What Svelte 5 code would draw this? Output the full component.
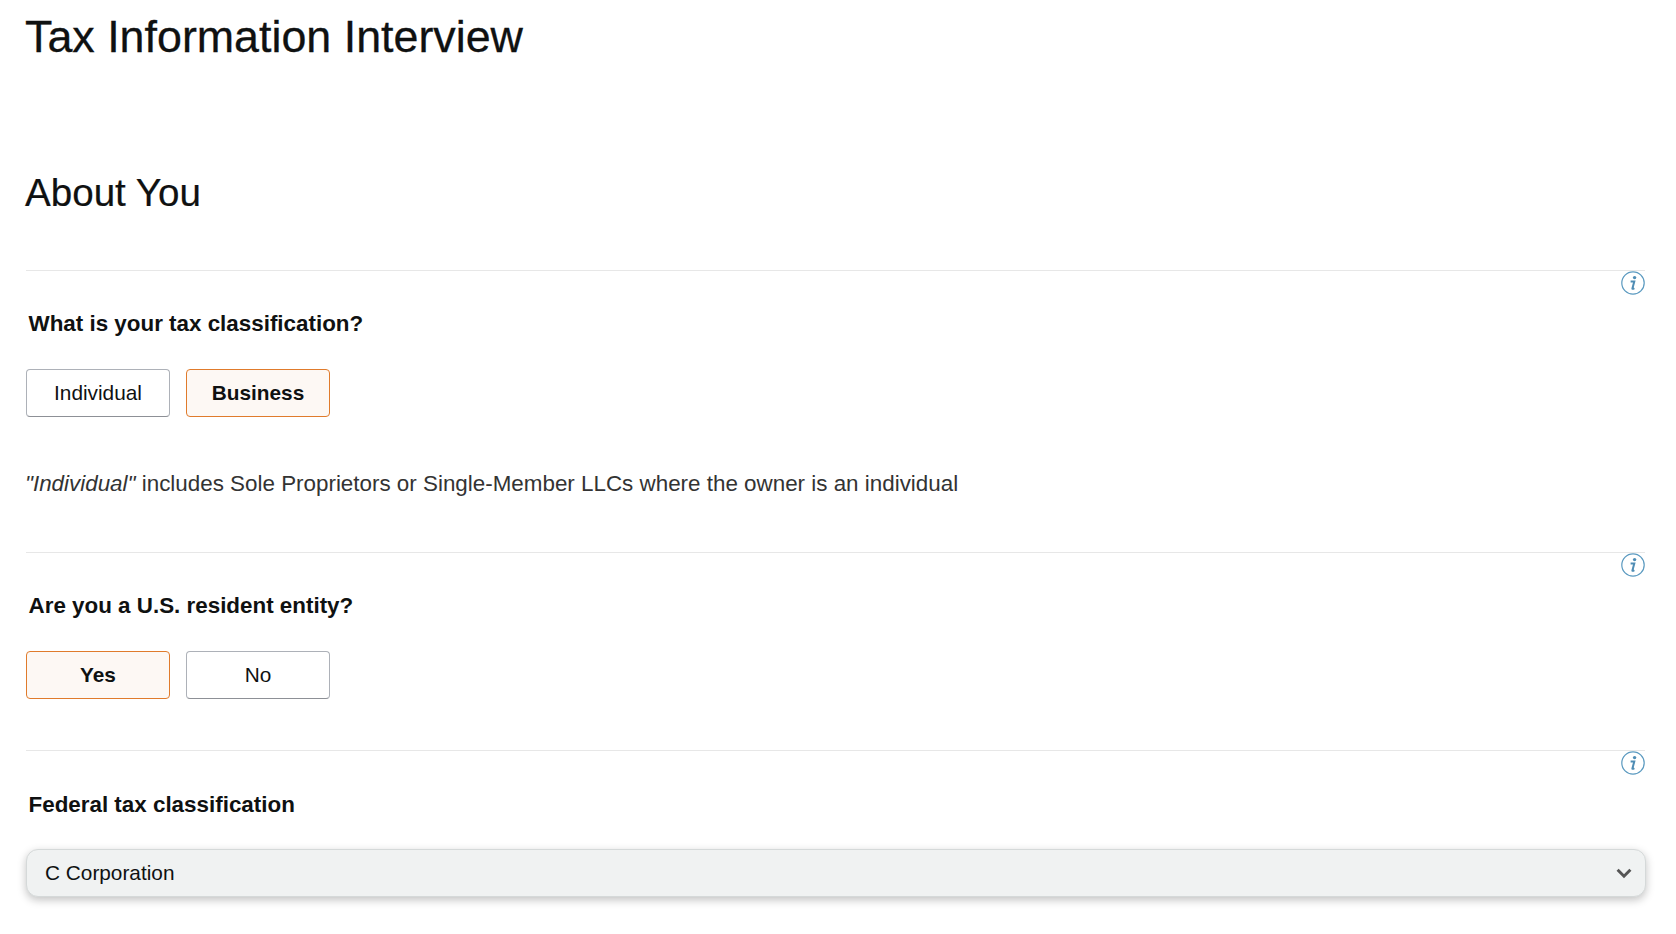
<script lang="ts">
  let taxClass = $state('Business');
  let resident = $state('Yes');
  let federal = $state('C Corporation');

  const federalOptions = ['C Corporation', 'S Corporation', 'Partnership', 'Trust/Estate', 'LLC'];
</script>

{#snippet infoIcon()}
  <svg class="info" viewBox="0 0 24 24" width="24" height="24" aria-hidden="true">
    <circle cx="12" cy="12" r="11.2" fill="none" stroke="#5b9ac0" stroke-width="1.2" />
    <circle cx="13.6" cy="6.6" r="1.7" fill="#4f8db5" />
    <path d="M9.6 10.5h3.7l-1.9 7c-.1.5.4.6 1.9-.4" fill="none" stroke="#4f8db5" stroke-width="2" />
  </svg>
{/snippet}

<main class="page">
  <h1>Tax Information Interview</h1>
  <h2>About You</h2>

  <section class="question first">
    {@render infoIcon()}
    <h3>What is your tax classification?</h3>
    <div class="choices">
      {#each ['Individual', 'Business'] as option}
        <button class:selected={taxClass === option} onclick={() => (taxClass = option)}>{option}</button>
      {/each}
    </div>
    <p class="hint"><em>"Individual"</em> includes Sole Proprietors or Single-Member LLCs where the owner is an individual</p>
  </section>

  <section class="question second">
    {@render infoIcon()}
    <h3>Are you a U.S. resident entity?</h3>
    <div class="choices">
      {#each ['Yes', 'No'] as option}
        <button class:selected={resident === option} onclick={() => (resident = option)}>{option}</button>
      {/each}
    </div>
  </section>

  <section class="question">
    {@render infoIcon()}
    <h3>Federal tax classification</h3>
    <div class="select-wrap">
      <select bind:value={federal}>
        {#each federalOptions as option}
          <option>{option}</option>
        {/each}
      </select>
      <svg class="chevron" viewBox="0 0 16 11" width="16" height="11" aria-hidden="true">
        <path d="M1.6 1.8 8 8.2l6.4-6.4" fill="none" stroke="#555" stroke-width="3" />
      </svg>
    </div>
  </section>
</main>

<style>
  :global(body) {
    margin: 0;
    background: #fff;
    color: #0f1111;
    font-family: "Liberation Sans", Arial, sans-serif;
  }

  .page {
    padding: 0 31px 30px 26px;
  }

  h1 {
    margin: 0 0 0 -1px;
    padding-top: 8px;
    font-size: 44.8px;
    line-height: 56px;
    font-weight: 400;
    -webkit-text-stroke: 0.3px #0f1111;
  }

  h2 {
    margin: 0 0 0 -1px;
    padding-top: 103px;
    font-size: 38.6px;
    line-height: 52px;
    font-weight: 400;
    -webkit-text-stroke: 0.2px #0f1111;
  }

  .question {
    position: relative;
    border-top: 1px solid #e7e7e7;
    padding-top: 38px;
  }

  .question.first {
    margin-top: 51px;
    padding-bottom: 52px;
  }

  .question.second {
    padding-bottom: 51px;
  }

  .question:last-child h3 {
    padding-top: 1px;
  }

  .question:last-child .select-wrap {
    margin-top: 29px;
  }

  .info {
    position: absolute;
    top: 0;
    right: 0;
  }

  h3 {
    margin: 0 0 0 2.5px;
    font-size: 22.4px;
    line-height: 30px;
    font-weight: 700;
  }

  .choices {
    display: flex;
    gap: 16px;
    margin-top: 30px;
  }

  button {
    width: 144px;
    height: 48px;
    box-sizing: border-box;
    background: #fff;
    border: 1px solid #adb1b8;
    border-bottom-color: #8d9096;
    border-radius: 4px;
    color: #0f1111;
    font: 400 20.8px "Liberation Sans", Arial, sans-serif;
    cursor: pointer;
  }

  button.selected {
    background: #fdf8f4;
    border-color: #e07b2c;
    font-weight: 700;
  }

  .hint {
    margin: 51px 0 0 -1px;
    font-size: 22.4px;
    line-height: 32px;
    color: #333;
  }

  .select-wrap {
    position: relative;
    margin-top: 30px;
    margin-right: -1px;
  }

  select {
    display: block;
    width: 100%;
    height: 48px;
    padding: 0 18px 2px;
    box-sizing: border-box;
    appearance: none;
    background: #f0f2f2;
    border: 1px solid #d5d9d9;
    border-radius: 12px;
    box-shadow: 0 3px 8px rgba(15, 17, 17, 0.25);
    color: #0f1111;
    font: 400 20.8px "Liberation Sans", Arial, sans-serif;
  }

  .chevron {
    position: absolute;
    top: 19px;
    right: 14px;
    pointer-events: none;
  }
</style>
